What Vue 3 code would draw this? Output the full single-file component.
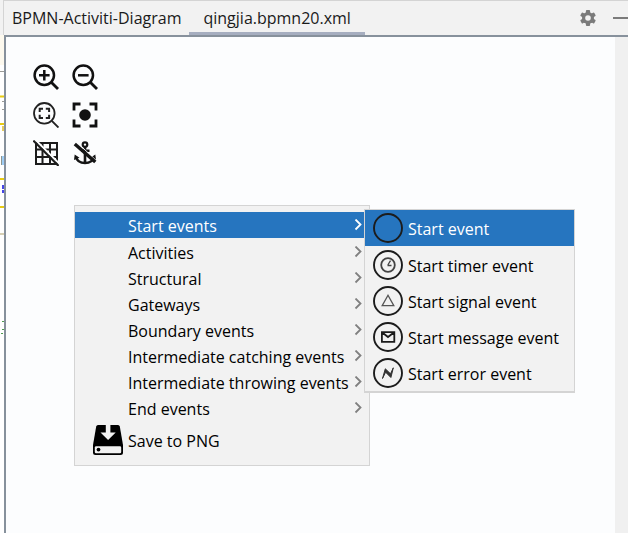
<script setup>
import { ref } from 'vue'

const tabs = ['BPMN-Activiti-Diagram', 'qingjia.bpmn20.xml']
const activeTab = ref(tabs[1])
const groups = [
  'Start events',
  'Activities',
  'Structural',
  'Gateways',
  'Boundary events',
  'Intermediate catching events',
  'Intermediate throwing events',
  'End events',
]
const activeGroup = ref(groups[0])
const startEvents = [
  { kind: 'plain', label: 'Start event' },
  { kind: 'timer', label: 'Start timer event' },
  { kind: 'signal', label: 'Start signal event' },
  { kind: 'message', label: 'Start message event' },
  { kind: 'error', label: 'Start error event' },
]
const activeEvent = ref('plain')
</script>

<template>
  <div class="window">
    <header class="header">
      <nav class="tabs">
        <button
          v-for="tab in tabs"
          :key="tab"
          type="button"
          class="tab"
          :class="{ current: tab === activeTab }"
          @click="activeTab = tab"
        >{{ tab }}</button>
      </nav>
      <div class="actions">
        <button type="button" class="action" aria-label="Settings">
          <svg width="16" height="16" viewBox="0 0 16 16">
            <g fill="#7b7b7b">
              <rect x="5.9" y="0" width="4.2" height="16" rx="1" />
              <rect x="5.9" y="0" width="4.2" height="16" rx="1" transform="rotate(60 8 8)" />
              <rect x="5.9" y="0" width="4.2" height="16" rx="1" transform="rotate(120 8 8)" />
              <circle cx="8" cy="8" r="6" />
            </g>
            <circle cx="8" cy="8" r="2.8" fill="#f2f2f2" />
          </svg>
        </button>
        <button type="button" class="action" aria-label="Hide">
          <svg width="15" height="16" viewBox="0 0 15 16"><path d="M0 8h15" stroke="#7b7b7b" stroke-width="2" /></svg>
        </button>
      </div>
    </header>

    <div class="body">
      <svg class="gutter" width="4" height="498" viewBox="0 0 4 498">
        <rect width="4" height="30" fill="#fdf9ee" />
        <path d="M0 36.500h4M2 66.500h2M2 74.500h2" stroke="#9a9a96" />
        <path d="M0 61.500h4M0 89h4M0 144h4M0 172h4" stroke="#e8cb12" stroke-width="2" />
        <path d="M3 91v5" stroke="#e5cc60" stroke-width="2" />
        <path d="M1.500 121v9" stroke="#8e958c" />
        <path d="M3 121v9" stroke="#9fcdf5" stroke-width="2" />
        <path d="M3 150v4M3 155v3" stroke="#4646e6" stroke-width="2" />
        <path d="M0 199h4" stroke="#d6cfb4" stroke-width="2" />
        <path d="M2 286.500h2M2 294.500h2M1 298.500h2" stroke="#4d9a4d" />
      </svg>

      <main class="canvas">
        <div class="tools">
          <button type="button" class="tool" aria-label="Zoom in">
            <svg viewBox="0 0 26 26" fill="none" stroke="#111" stroke-width="2.500">
              <circle cx="11.300" cy="11.300" r="9.700" />
              <path d="M18.500 18.500l6.500 6.500" stroke-width="2.800" />
              <path d="M6 11.300h10.600M11.300 6v10.600" stroke-width="2.500" />
            </svg>
          </button>
          <button type="button" class="tool" aria-label="Zoom out">
            <svg viewBox="0 0 26 26" fill="none" stroke="#111" stroke-width="2.500">
              <circle cx="11.300" cy="11.300" r="9.700" />
              <path d="M18.500 18.500l6.500 6.500" stroke-width="2.800" />
              <path d="M6 11.300h10.600" stroke-width="2.500" />
            </svg>
          </button>
          <button type="button" class="tool" aria-label="Fit to window">
            <svg viewBox="0 0 26 26" fill="none" stroke="#222" stroke-width="1.800">
              <circle cx="11.300" cy="11.300" r="10.300" />
              <path d="M18.800 18.800l6.700 6.700" stroke-width="1.900" />
              <path d="M6.700 10V6.700H10M12.800 6.700h3.300V10M16.100 12.800v3.300h-3.300M10 16.100H6.700v-3.300" stroke-width="2" />
            </svg>
          </button>
          <button type="button" class="tool" aria-label="Actual size">
            <svg viewBox="0 0 26 26" fill="none" stroke="#111" stroke-width="2.800">
              <path d="M2 8.500V2H8.500M17.500 2H24V8.500M24 17.500V24H17.500M8.500 24H2V17.500" />
              <circle cx="13" cy="13" r="5.800" fill="#111" stroke="none" />
            </svg>
          </button>
          <button type="button" class="tool" aria-label="Toggle grid">
            <svg viewBox="0 0 26 26" fill="none" stroke="#1c1c1c" stroke-width="2">
              <path d="M3 3h21v21H3zM9.500 3V24M17 3V24M3 9.500H24M3 17H24" />
              <path d="M1.800-.7l25 25" stroke="#fcfdfe" stroke-width="2" />
              <path d="M.3.600l25.300 25.300" stroke-width="2.200" />
            </svg>
          </button>
          <button type="button" class="tool" aria-label="Toggle anchors">
            <svg viewBox="0 0 26 26" fill="none" stroke="#151515" stroke-width="2.600">
              <circle cx="13" cy="4.600" r="2.300" stroke-width="2.200" />
              <path d="M13 7V24M9 10.800h8.500" />
              <path d="M4 17c1 4 4.500 6 9 6s8-2 9-6" />
              <path d="M2 20l.7-5.500 4.800 3.300zM24 20l-.7-5.500-4.800 3.300z" fill="#151515" stroke="none" />
              <path d="M5 2.300l19.500 18.500" stroke="#fcfdfe" stroke-width="1" />
              <path d="M2.800 4l20.500 18" stroke-width="3.400" />
            </svg>
          </button>
        </div>

        <div class="menu" role="menu">
          <button
            v-for="group in groups"
            :key="group"
            type="button"
            role="menuitem"
            class="row"
            :class="{ selected: group === activeGroup }"
            @click="activeGroup = group"
          >
            <span class="label">{{ group }}</span>
            <svg class="chevron" width="8" height="12" viewBox="0 0 8 12" fill="none" stroke="currentColor" stroke-width="1.800"><path d="M1.500.5l5 5-5 5" /></svg>
          </button>
          <button type="button" role="menuitem" class="row save">
            <svg class="icon" width="30" height="30" viewBox="0 0 30 30">
              <path d="M5 0h20q1.500 0 1.800 1.500L30 20v7.500q0 2.500-2.500 2.500h-25Q0 30 0 27.500V20L3.200 1.500Q3.500 0 5 0z" fill="#000" />
              <path d="M12.800 0h4.600v7.500h5.300L15.100 15 7.500 7.500h5.300z" fill="#f2f2f2" />
              <rect x="1.800" y="21.200" width="26.400" height="7" rx="1.300" fill="#f2f2f2" />
              <circle cx="5.500" cy="24.600" r="1.900" fill="#000" />
            </svg>
            <span class="label">Save to PNG</span>
          </button>
        </div>

        <div class="menu submenu" role="menu">
          <button
            v-for="event in startEvents"
            :key="event.kind"
            type="button"
            role="menuitem"
            class="row event"
            :class="{ selected: event.kind === activeEvent }"
            @click="activeEvent = event.kind"
          >
            <svg class="icon" width="30" height="30" viewBox="0 0 30 30" fill="none" stroke="#1c1c1c">
              <circle cx="15" cy="15" r="14" stroke-width="1.900" />
              <g v-if="event.kind === 'timer'" stroke="#444">
                <circle cx="15" cy="15" r="6.800" stroke-width="1.800" />
                <path d="M14.500 15.500h4M14.800 15l2.700-4.300" stroke-width="1.300" />
              </g>
              <path v-if="event.kind === 'signal'" d="M15 9.300l5.800 10.400H9.200z" stroke="#555" stroke-width="1.300" />
              <path v-if="event.kind === 'message'" d="M8.900 10.200h12.400v9.600H8.900zM9 10.300l6 4.700 6.200-4.700" stroke-width="1.800" />
              <path v-if="event.kind === 'error'" d="M9.500 20.500l2.800-9.700 5.200 5 2.800-6-2.400 9.700-5.300-5.300z" fill="#333" stroke="#333" stroke-width="1" />
            </svg>
            <span class="label">{{ event.label }}</span>
          </button>
        </div>
      </main>
      <div class="scrollbar"></div>
    </div>
  </div>
</template>

<style>
body {
  margin: 0;
}
</style>

<style scoped>
.window {
  display: flex;
  flex-direction: column;
  min-height: 100vh;
  background: #f2f2f2;
  color: #000;
  font-family: "Open Sans", "Noto Sans", sans-serif;
  font-size: 16px;
}
button {
  border: 0;
  padding: 0;
  background: none;
  color: inherit;
  font: inherit;
}
.header {
  display: flex;
  justify-content: space-between;
  box-sizing: border-box;
  height: 35px;
  margin-left: 3px;
  border-top: 1px solid #d4d4d4;
  border-left: 1px solid #d4d4d4;
}
.tabs {
  display: flex;
}
.tab {
  padding: 2px 8px 0;
  border-bottom: 3px solid transparent;
  color: #1a1a1a;
}
.tab.current {
  padding: 2px 14px 0;
  border-bottom-color: #a6aec0;
}
.actions {
  display: flex;
  align-items: center;
  gap: 17px;
}
.action {
  display: flex;
}
.body {
  display: flex;
  flex: 1;
}
.gutter {
  flex: none;
  background: #fff;
}
.canvas {
  position: relative;
  flex: 1;
  border-top: 2px solid #87919c;
  border-left: 2px solid #87919c;
  background: #fcfdfe;
}
.scrollbar {
  width: 13px;
  border-top: 2px solid #87919c;
  background: #f0f0f0;
}
.tools {
  display: grid;
  grid-template-columns: 26px 26px;
  gap: 12px 13px;
  padding: 27px;
}
.tool {
  display: flex;
}
.tool svg {
  width: 26px;
  height: 26px;
}
.menu {
  position: absolute;
  top: 168px;
  left: 68px;
  display: flex;
  flex-direction: column;
  box-sizing: border-box;
  width: 296px;
  padding: 6px 0;
  border: 1px solid #d4d4d4;
  background: #f2f2f2;
}
.submenu {
  top: 172px;
  left: 358px;
  width: 211px;
  padding: 0;
  border-bottom-width: 2px;
}
.row {
  display: flex;
  align-items: center;
  height: 26px;
  padding: 0 7px 0 53px;
  text-align: left;
  white-space: nowrap;
}
.row.selected {
  margin-bottom: 1px;
  background: #2675bf;
  color: #fff;
}
.label {
  flex: 1;
  padding-top: 2px;
}
.chevron {
  flex: none;
  color: #808080;
}
.selected .chevron {
  color: #fff;
}
.icon {
  flex: none;
}
.row.save {
  gap: 5px;
  height: 38px;
  padding-left: 18px;
}
.row.event {
  gap: 5px;
  height: 36px;
  padding: 0 8px;
}
</style>
